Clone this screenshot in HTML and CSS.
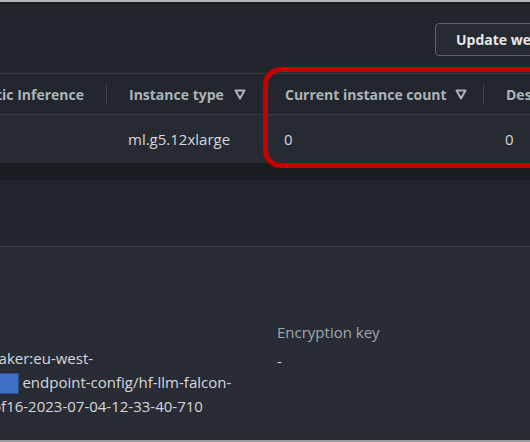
FILE: index.html
```html
<!DOCTYPE html>
<html>
<head>
<meta charset="utf-8">
<link rel="stylesheet" href="styles.css">
</head>
<body>
<div class="page">
  <div class="topline"></div>
  <div class="topdark"></div>
  <div class="actions">
    <button class="btn">Update weights</button>
  </div>
  <div class="table-wrap">
    <div class="row head">
      <div class="cell c1"><span>Elastic Inference</span></div>
      <div class="cell c2"><span>Instance type</span>
        <svg class="sort" width="12" height="11" viewBox="0 0 12 11"><polygon points="1.5,1.5 10.5,1.5 6,9.5" fill="none" stroke="#aab5b8" stroke-width="2" stroke-linejoin="round"/></svg>
      </div>
      <div class="cell c3"><span>Current instance count</span>
        <svg class="sort" width="12" height="11" viewBox="0 0 12 11"><polygon points="1.5,1.5 10.5,1.5 6,9.5" fill="none" stroke="#aab5b8" stroke-width="2" stroke-linejoin="round"/></svg>
      </div>
      <div class="cell c4"><span>Desired instance count</span></div>
    </div>
    <div class="row body">
      <div class="cell c1"></div>
      <div class="cell c2">ml.g5.12xlarge</div>
      <div class="cell c3">0</div>
      <div class="cell c4">0</div>
    </div>
    <div class="highlight"></div>
  </div>
  <div class="gap"></div>
  <div class="section-head"></div>
  <div class="details">
    <div class="col left">
      <div class="value line">arn:aws:sagemaker:eu-west-</div>
      <div class="value line">1:<span class="redact"></span> endpoint-config/hf-llm-falcon-</div>
      <div class="value line">180b-instruct-bf16-2023-07-04-12-33-40-710</div>
    </div>
    <div class="col right">
      <div class="label">Encryption key</div>
      <div class="value">-</div>
    </div>
  </div>
  <div class="bottomline"></div>
</div>
</body>
</html>
```

FILE: styles.css
```css
html, body {
  margin: 0;
  padding: 0;
  background: #22252c;
  overflow: hidden;
}
.page {
  width: 530px;
  height: 442px;
  overflow: hidden;
  font-family: "Open Sans", "Noto Sans", sans-serif;
  display: flex;
  flex-direction: column;
}
.topline {
  height: 2px;
  background: #b4b6b9;
  flex: none;
}
.topdark {
  height: 2px;
  background: #16191e;
  flex: none;
}
.actions {
  height: 69px;
  flex: none;
  display: flex;
  justify-content: flex-start;
  padding-left: 435px;
  padding-top: 19px;
  box-sizing: border-box;
  background: #22252c;
}
.btn {
  flex: none;
  height: 33px;
  width: 160px;
  background: #262a31;
  border: 1.5px solid #5a6270;
  border-radius: 4px;
  color: #e6e8ea;
  font-family: inherit;
  font-weight: 700;
  font-size: 14px;
  text-align: left;
  padding: 0 0 0 20px;
  white-space: nowrap;
}
.table-wrap {
  position: relative;
  flex: none;
}
.row {
  display: grid;
  grid-template-columns: 106px 158px 219px 1fr;
  align-items: center;
}
.head {
  height: 42px;
  background: #23262d;
  border-top: 1px solid #353a42;
  border-bottom: 1px solid #353a42;
  box-sizing: border-box;
  color: #aab5b8;
  font-weight: 700;
  font-size: 14px;
}
.body {
  height: 48px;
  background: #262a31;
  color: #d5d9dc;
  font-size: 15px;
}
.cell {
  white-space: nowrap;
  overflow: hidden;
  padding-left: 22px;
  display: flex;
  align-items: center;
  box-sizing: border-box;
  height: 100%;
}
.head .cell {
  border-left: 1px solid #3c424b;
  height: 20px;
}
.head .c1 {
  border-left: none;
  justify-content: flex-end;
  padding-right: 22px;
  padding-left: 0;
}
.body .c1 {
  padding: 0;
}
.c3 { padding-left: 20px; }
.head .c2 { justify-content: space-between; padding-right: 18px; }
.head .c3 { justify-content: space-between; padding-right: 16px; }
.sort {
  flex: none;
}
.highlight {
  position: absolute;
  left: 263px;
  top: -6px;
  width: 320px;
  height: 101px;
  border: 5px solid #c40000;
  border-radius: 18px;
  box-sizing: border-box;
}
.gap {
  height: 17px;
  background: #1a1d22;
  flex: none;
}
.section-head {
  height: 66px;
  background: #22252c;
  border-bottom: 1px solid #383d45;
  flex: none;
}
.details {
  flex: 1;
  background: #292c34;
  display: grid;
  grid-template-columns: 277px 1fr;
  align-items: start;
  padding-top: 73px;
  box-sizing: border-box;
}
.col.left {
  padding-top: 26px;
  margin-left: -106px;
}
.line {
  white-space: nowrap;
}
.label {
  color: #9da8ab;
  font-size: 15px;
  line-height: 24px;
  margin-bottom: 5px;
}
.value {
  color: #d5d9dc;
  font-size: 15px;
  line-height: 24px;
}
.redact {
  display: inline-block;
  width: 112px;
  height: 21px;
  background: #3f6fc4;
  border: 1px solid #2a4f8f;
  vertical-align: middle;
  box-sizing: border-box;
}
.bottomline {
  height: 2px;
  background: #9a9ca0;
  flex: none;
}
```
